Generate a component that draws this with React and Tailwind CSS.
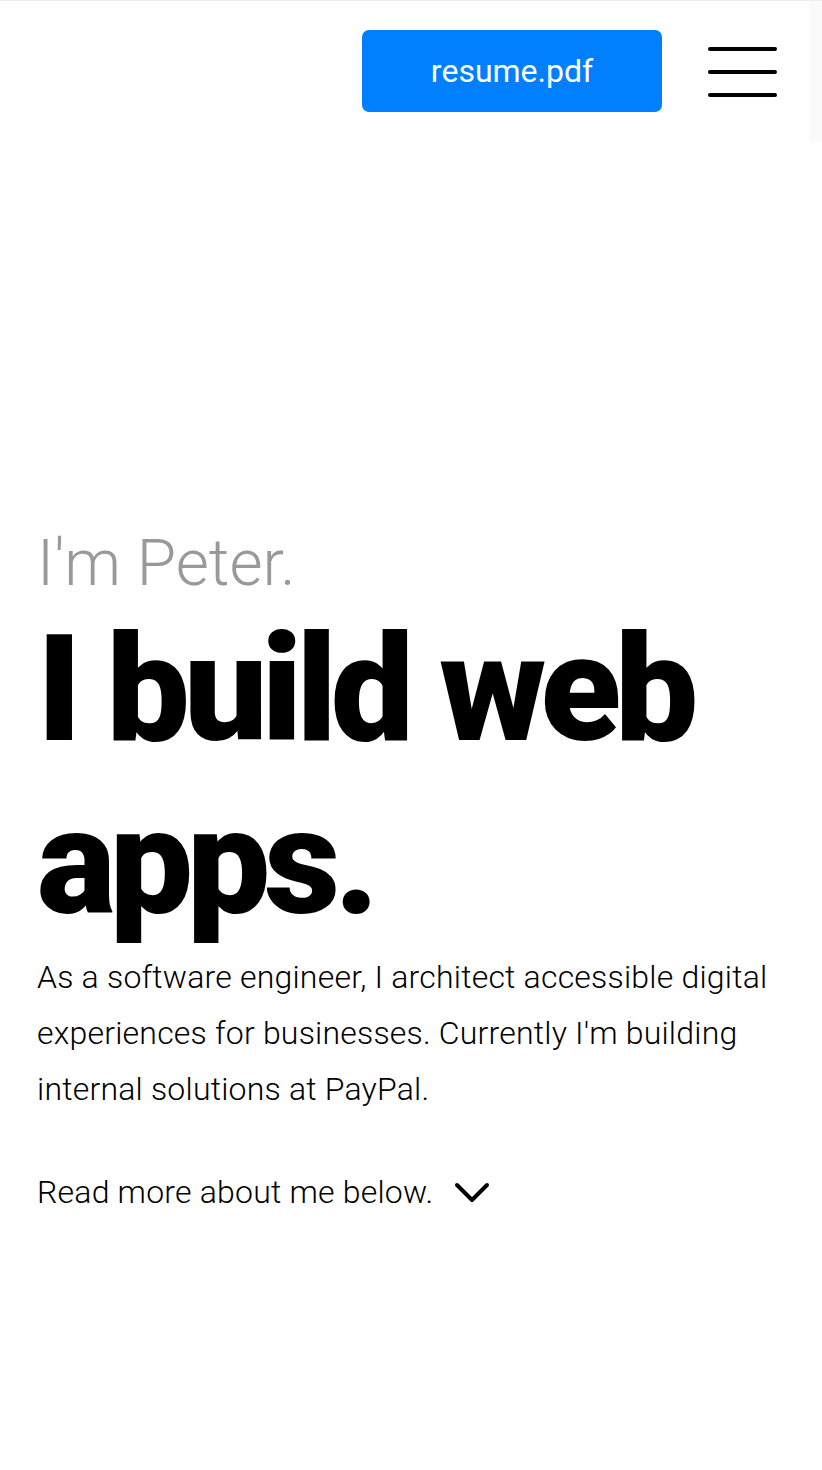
import React from 'react';

const Header = () => {
    return (
        <header className="h-[141px] border-t border-[#eeeeee] bg-[#fafafa]">
            <div className="mr-[12px] h-full bg-white flex items-start justify-end pt-[29px] pr-[33px]">
                <a
                    href="#"
                    className="w-[300px] h-[82px] rounded-[7px] bg-[#0080ff] text-white text-[32px] flex items-center justify-center"
                >
                    resume.pdf
                </a>
                <button className="ml-[46px] mt-[17px] w-[69px] flex flex-col gap-[19px]" aria-label="menu">
                    <span className="block h-[4px] rounded-full bg-black"></span>
                    <span className="block h-[4px] rounded-full bg-black"></span>
                    <span className="block h-[4px] rounded-full bg-black"></span>
                </button>
            </div>
        </header>
    );
};

const App = () => {
    return (
        <div className="min-h-[1470px] bg-white text-black" style={{ fontFamily: 'Roboto, "Noto Sans", sans-serif' }}>
            <Header />

            {/* Hero */}
            <section className="px-[37px] pt-[385px]">
                <p className="text-[64px] font-light leading-[1.2] text-[#999999]">I'm Peter.</p>
                <h1 className="text-[148px] font-black leading-[1.17] tracking-[-6px]">I build web apps.</h1>
                <p className="text-[32px] font-light leading-[56px] tracking-[0.2px]">
                    As a software engineer, I architect accessible digital experiences for businesses. Currently I'm building internal solutions at PayPal.
                </p>
                <a href="#" className="mt-[51px] flex items-center gap-[21px] text-[32px] font-light tracking-[0.2px]">
                    Read more about me below.
                    <svg width="36" height="22" viewBox="0 0 36 22" fill="none" stroke="black" strokeWidth="4" strokeLinecap="round" strokeLinejoin="round">
                        <path d="M3 4 L18 19 L33 4" />
                    </svg>
                </a>
            </section>
        </div>
    );
};

export default App;
